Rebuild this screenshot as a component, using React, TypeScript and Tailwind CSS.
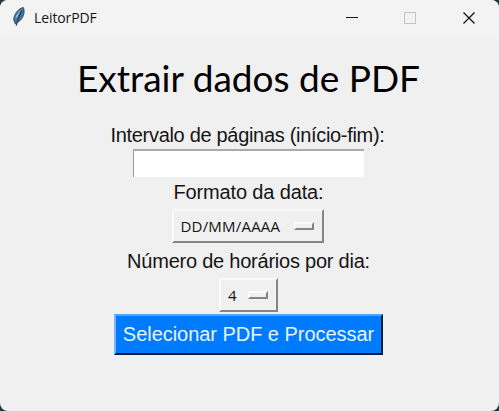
import type { ReactNode } from "react";

function Feather() {
  return (
    <svg width="14" height="20" viewBox="0 0 14 20" className="ml-3 mt-[7px] shrink-0">
      <path d="M11.3 0.5C6 1.5 2 7.5 1.7 12.5L3.3 17L6 15C11 12.5 13.5 5 11.3 0.5Z" fill="#42709f" stroke="#39424c" strokeWidth="0.9" />
      <path d="M10.2 1.8C6.8 4 3.8 8.3 3.3 12L5.5 9.8L7.2 5.8Z" fill="#9ab7d4" />
      <path d="M9.8 3L7 10L4.2 18.8" stroke="#21374f" strokeWidth="1" fill="none" />
    </svg>
  );
}

function Label({ children, className }: { children: ReactNode; className: string }) {
  return <div className={`h-[30px] shrink-0 whitespace-nowrap text-center text-[20px] leading-[30px] ${className}`}>{children}</div>;
}

function OptionMenu({ value, className }: { value: string; className: string }) {
  return (
    <button className={`flex h-[34px] shrink-0 items-center justify-between border-2 border-t-[#fafafa] border-l-[#fafafa] border-r-[#858585] border-b-[#858585] bg-[#f0f0f0] pl-[7px] pr-[8px] font-['Open_Sans',sans-serif] text-[#151515] ${className}`}>
      <span className="whitespace-nowrap text-[15px] leading-5 tracking-[0.2px]">{value}</span>
      <span className="h-[8px] w-[20px] border-2 border-t-[#fafafa] border-l-[#fafafa] border-r-[#858585] border-b-[#858585] bg-[#f0f0f0]" />
    </button>
  );
}

export default function App() {
  return (
    <div className="h-[411px] w-[499px] overflow-hidden bg-[#213b42] font-['Liberation_Sans',Arial,sans-serif] text-[#151515]">
      <div className="flex h-full w-full flex-col items-center rounded-[8px] bg-[#f0f0f0]">
        <header className="flex h-[39px] w-full shrink-0 rounded-t-[8px] bg-[#f3f3f3]">
          <Feather />
          <span className="ml-[8px] mt-[8px] font-['Open_Sans',sans-serif] text-[14px] leading-5 tracking-[-0.1px]">LeitorPDF</span>
          <svg className="ml-auto" width="169" height="37" viewBox="330 0 169 37" fill="none">
            <path d="M346 17.5H358" stroke="#111" />
            <rect x="404.5" y="12.5" width="11" height="11" stroke="#c4c4c4" />
            <path d="M463.5 12.5L474.5 23.5M474.5 12.5L463.5 23.5" stroke="#111" strokeWidth="1.3" />
          </svg>
        </header>
        <h1 className="mt-[13px] h-[52px] shrink-0 -translate-x-px whitespace-nowrap font-['Lato',sans-serif] text-[37px] leading-[52px] text-black">Extrair dados de PDF</h1>
        <Label className="mt-[16px] tracking-[-0.31px] -translate-x-[2px]">Intervalo de páginas (início-fim):</Label>
        <input aria-label="Intervalo de páginas" className="-mt-px h-[28px] w-[231px] -translate-x-px shrink-0 border-t-2 border-l border-t-[#aaa] border-l-[#999] bg-white outline-none" />
        <Label className="tracking-[-0.15px] -translate-x-px">Formato da data:</Label>
        <OptionMenu value="DD/MM/AAAA" className="mt-[2px] w-[152px] -translate-x-[2px]" />
        <Label className="mt-[3px] tracking-[-0.23px] -translate-x-px">Número de horários por dia:</Label>
        <OptionMenu value="4" className="mt-[2px] w-[59px] -translate-x-px" />
        <button className="mt-[2px] h-[41px] w-[269px] shrink-0 -translate-x-px whitespace-nowrap border-2 border-t-[#4ba4ff] border-l-[#78b7ff] border-r-[#071d36] border-b-[#071d36] bg-[#007bff] text-[20px] leading-[37px] tracking-[-0.04px] text-[#e8f4ff]">Selecionar PDF e Processar</button>
      </div>
    </div>
  );
}
